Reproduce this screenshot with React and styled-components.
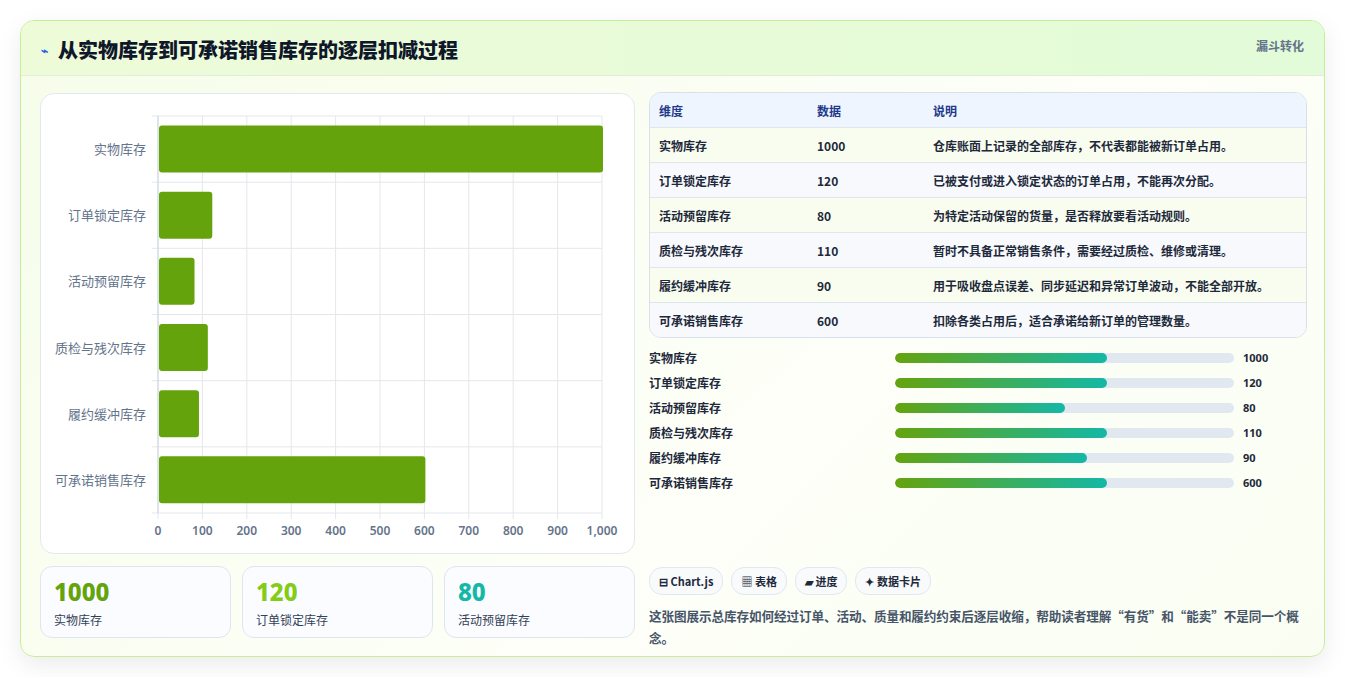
import React from "react";
import styled, { createGlobalStyle } from "styled-components";

const G = createGlobalStyle`
  body{margin:0;background:#fff;font-family:"Noto Sans CJK SC","Noto Sans",sans-serif;}
`;
const Page = styled.div`padding:20px 20px 20px 20px;`;
const Card = styled.div`
  width:1305px;height:637px;box-sizing:border-box;border:1px solid #c9ec9a;border-radius:14px;
  background:linear-gradient(135deg,#f6fde9,#fdfff8 60%,#fafef2);overflow:hidden;
  box-shadow:0 8px 24px rgba(0,0,0,.08);display:flex;flex-direction:column;`;
const Header = styled.div`
  height:54px;flex:none;display:flex;align-items:center;justify-content:space-between;padding:0 20px;
  background:linear-gradient(90deg,#eefbd9,#e2fbd8);border-bottom:1px solid #e2ecd8;`;
const Title = styled.div`font-size:20px;font-weight:800;color:#0f172a;display:flex;align-items:center;gap:10px;margin-top:2px;`;
const Tag = styled.div`font-size:12px;font-weight:700;color:#64748b;align-self:flex-start;margin-top:16px;`;
const Body = styled.div`display:grid;grid-template-columns:595px 658px;gap:14px;padding:17px 19px 0 19px;`;
const Col = styled.div`display:flex;flex-direction:column;`;
const ChartBox = styled.div`height:461px;box-sizing:border-box;border:1px solid #e2e8f0;border-radius:14px;background:#fff;position:relative;`;
const Stats = styled.div`display:grid;grid-template-columns:repeat(3,1fr);gap:11px;margin-top:12px;`;
const Stat = styled.div`height:72px;box-sizing:border-box;border:1px solid #dde6f0;border-radius:12px;background:#fafcff;padding:10px 13px;`;
const Num = styled.div`font-size:24px;font-weight:800;color:${p=>p.c};line-height:30px;font-family:"Noto Sans",sans-serif;`;
const StatL = styled.div`font-size:12px;color:#334155;margin-top:4px;`;
const Table = styled.div`border:1px solid #d8e0ea;border-radius:12px;overflow:hidden;margin-top:-1px;`;
const Row = styled.div`display:grid;grid-template-columns:158px 116px 1fr;height:34px;align-items:center;padding:0 9px;font-size:12px;
  background:${p=>p.h?"#eef5ff":p.alt?"#f7f9fc":"#f9fdef"};color:${p=>p.h?"#1e3a8a":"#1e293b"};font-weight:${p=>p.h?700:600};
  border-bottom:${p=>p.last?"none":"1px solid #dfe6ee"};`;
const Bars = styled.div`display:flex;flex-direction:column;gap:9px;margin-top:11px;`;
const BarRow = styled.div`display:grid;grid-template-columns:246px 339px 1fr;align-items:center;height:16px;font-size:12px;font-weight:600;color:#1e293b;`;
const Track = styled.div`height:10px;border-radius:5px;background:#e2e8f0;overflow:hidden;`;
const Fill = styled.div`height:100%;border-radius:5px;background:linear-gradient(90deg,#65a30d,#14b8a6);`;
const Val = styled.div`padding-left:9px;font-family:"Noto Sans",sans-serif;font-weight:700;font-size:11px;`;
const Chips = styled.div`display:flex;gap:8px;margin-top:77px;`;
const Chip = styled.div`height:26px;padding:0 9px;border:1px solid #e2e8f0;border-radius:13px;background:#f8fafc;display:flex;align-items:center;font-size:11px;font-weight:700;color:#1e293b;gap:3px;`;
const Desc = styled.p`margin:10px 0 0;font-size:12.6px;line-height:22px;color:#475569;font-weight:600;letter-spacing:-0.1px;`;
const Lbl = styled.div`position:absolute;right:${p=>p.r}px;font-size:13px;color:#64748b;`;
const XL = styled.div`position:absolute;top:428px;font-size:12px;color:#64748b;font-weight:600;transform:translateX(-50%);font-family:"Noto Sans",sans-serif;`;

const cats=[["实物库存",1000],["订单锁定库存",120],["活动预留库存",80],["质检与残次库存",110],["履约缓冲库存",90],["可承诺销售库存",600]];
const desc=["仓库账面上记录的全部库存，不代表都能被新订单占用。","已被支付或进入锁定状态的订单占用，不能再次分配。","为特定活动保留的货量，是否释放要看活动规则。","暂时不具备正常销售条件，需要经过质检、维修或清理。","用于吸收盘点误差、同步延迟和异常订单波动，不能全部开放。","扣除各类占用后，适合承诺给新订单的管理数量。"];
const pct=[62.5,62.5,50,62.5,56.5,62.5];

function Chart(){
  const x0=117,w=444,y0=22,h=397,step=h/6;
  return (<>
    <svg width="595" height="461" style={{position:"absolute",left:0,top:0}}>
      {Array.from({length:11}).map((_,i)=>(<line key={i} x1={x0+i*w/10} x2={x0+i*w/10} y1={y0} y2={y0+h+6} stroke="#e5e7eb"/>))}
      {Array.from({length:7}).map((_,i)=>(<line key={i} x1={x0-6} x2={x0+w} y1={y0+i*step} y2={y0+i*step} stroke="#e5e7eb"/>))}
      <line x1={x0} x2={x0} y1={y0} y2={y0+h} stroke="#cbd5e1"/>
      {cats.map(([c,v],i)=>(<rect key={c} x={x0+1} y={y0+i*step+9.5} width={v/1000*w} height={47} rx="3" fill="#65a30d"/>))}
    </svg>
    {cats.map(([c],i)=>(<Lbl key={c} r={488} style={{top:y0+i*step+step/2-10}}>{c}</Lbl>))}
    {Array.from({length:11}).map((_,i)=>(<XL key={i} style={{left:x0+i*w/10}}>{i===10?"1,000":i*100}</XL>))}
  </>);
}

export default function App(){
  return (<Page><G/><Card>
    <Header><Title><span style={{color:"#2563eb",fontSize:12}}>⌁</span>从实物库存到可承诺销售库存的逐层扣减过程</Title><Tag>漏斗转化</Tag></Header>
    <Body>
      <Col>
        <ChartBox><Chart/></ChartBox>
        <Stats>
          <Stat><Num c="#65a30d">1000</Num><StatL>实物库存</StatL></Stat>
          <Stat><Num c="#84cc16">120</Num><StatL>订单锁定库存</StatL></Stat>
          <Stat><Num c="#14b8a6">80</Num><StatL>活动预留库存</StatL></Stat>
        </Stats>
      </Col>
      <Col>
        <Table>
          <Row h><span>维度</span><span>数据</span><span>说明</span></Row>
          {cats.map(([c,v],i)=>(<Row key={c} alt={i%2===1} last={i===5}><span>{c}</span><span>{v}</span><span>{desc[i]}</span></Row>))}
        </Table>
        <Bars>
          {cats.map(([c,v],i)=>(<BarRow key={c}><span>{c}</span><Track><Fill style={{width:pct[i]+"%"}}/></Track><Val>{v}</Val></BarRow>))}
        </Bars>
        <Chips><Chip>⊟ Chart.js</Chip><Chip>▦ 表格</Chip><Chip>▰ 进度</Chip><Chip>✦ 数据卡片</Chip></Chips>
        <Desc>这张图展示总库存如何经过订单、活动、质量和履约约束后逐层收缩，帮助读者理解“有货”和“能卖”不是同一个概念。</Desc>
      </Col>
    </Body>
  </Card></Page>);
}
